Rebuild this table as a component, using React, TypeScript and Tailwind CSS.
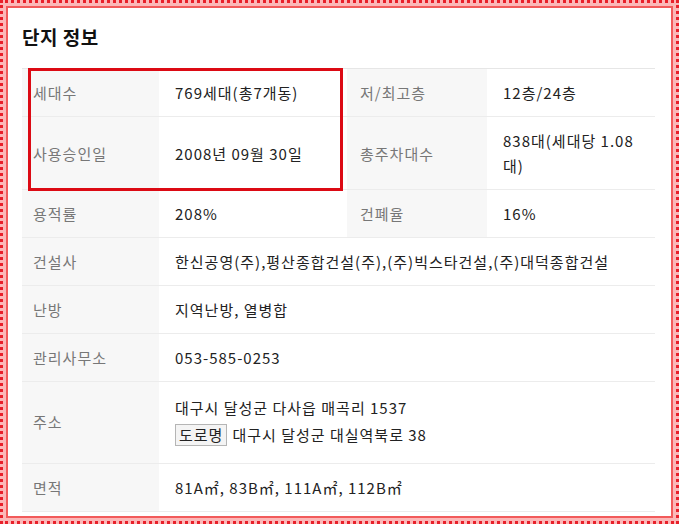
type Row = {
  label: string;
  value: React.ReactNode;
  label2?: string;
  value2?: React.ReactNode;
  cellClass?: string;
};

const rows: Row[] = [
  { label: "세대수", value: "769세대(총7개동)", label2: "저/최고층", value2: "12층/24층" },
  {
    label: "사용승인일",
    value: "2008년 09월 30일",
    label2: "총주차대수",
    value2: (
      <>
        838대(세대당 1.08
        <br />
        대)
      </>
    ),
  },
  { label: "용적률", value: "208%", label2: "건폐율", value2: "16%" },
  { label: "건설사", value: "한신공영(주),평산종합건설(주),(주)빅스타건설,(주)대덕종합건설" },
  { label: "난방", value: "지역난방, 열병합" },
  { label: "관리사무소", value: "053-585-0253" },
  {
    label: "주소",
    cellClass: "pt-[13px] pb-[16px]",
    value: (
      <>
        <div>대구시 달성군 다사읍 매곡리 1537</div>
        <div className="mt-[2px]">
          <span className="mr-[5px] inline-block border border-[#b5b5b5] bg-[#f4f4f4] px-[3px] leading-[20px]">
            도로명
          </span>
          대구시 달성군 대실역북로 38
        </div>
      </>
    ),
  },
  { label: "면적", value: "81A㎡, 83B㎡, 111A㎡, 112B㎡" },
];

const labelCls = "bg-[#f7f7f7] pl-[11px] pr-2 align-middle text-[#777]";
const valueCls = "px-[16px] align-middle text-[#222]";

export default function App() {
  return (
    <div
      className="h-[524px] w-[679px] overflow-hidden border-[3px] border-dotted border-[#e8202a] bg-[#fbb8b8] p-[3px]"
      style={{ fontFamily: '"Noto Sans CJK KR", "Noto Sans", sans-serif' }}
    >
      <div className="h-full overflow-hidden border-2 border-[#f25a5a] bg-white pl-[14px] pr-[12px] pt-[15px]">
        <h2 className="text-[19px] font-bold leading-[28px] tracking-[0.5px] text-[#111]">단지 정보</h2>
        <div className="relative mt-[17px]">
          <table className="w-[633px] table-fixed border-t border-[#e6e6e6] text-[15px] leading-[25px] tracking-[1px]">
            <colgroup>
              <col className="w-[137px]" />
              <col className="w-[188px]" />
              <col className="w-[140px]" />
              <col className="w-[168px]" />
            </colgroup>
            <tbody>
              {rows.map((r) => {
                const pad = r.cellClass ?? "py-[11px]";
                return (
                  <tr key={r.label} className="border-b border-[#ececec]">
                    <td className={`${labelCls} ${pad}`}>{r.label}</td>
                    {r.label2 ? (
                      <>
                        <td className={`${valueCls} ${pad}`}>{r.value}</td>
                        <td className={`${labelCls} ${pad} pl-[13px]`}>{r.label2}</td>
                        <td className={`${valueCls} ${pad}`}>{r.value2}</td>
                      </>
                    ) : (
                      <td colSpan={3} className={`${valueCls} ${pad}`}>
                        {r.value}
                      </td>
                    )}
                  </tr>
                );
              })}
            </tbody>
          </table>
          {/* highlight box drawn over the first two rows */}
          <div className="pointer-events-none absolute left-[6px] top-0 h-[123px] w-[315px] border-[3px] border-[#dc0a14]" />
        </div>
      </div>
    </div>
  );
}
